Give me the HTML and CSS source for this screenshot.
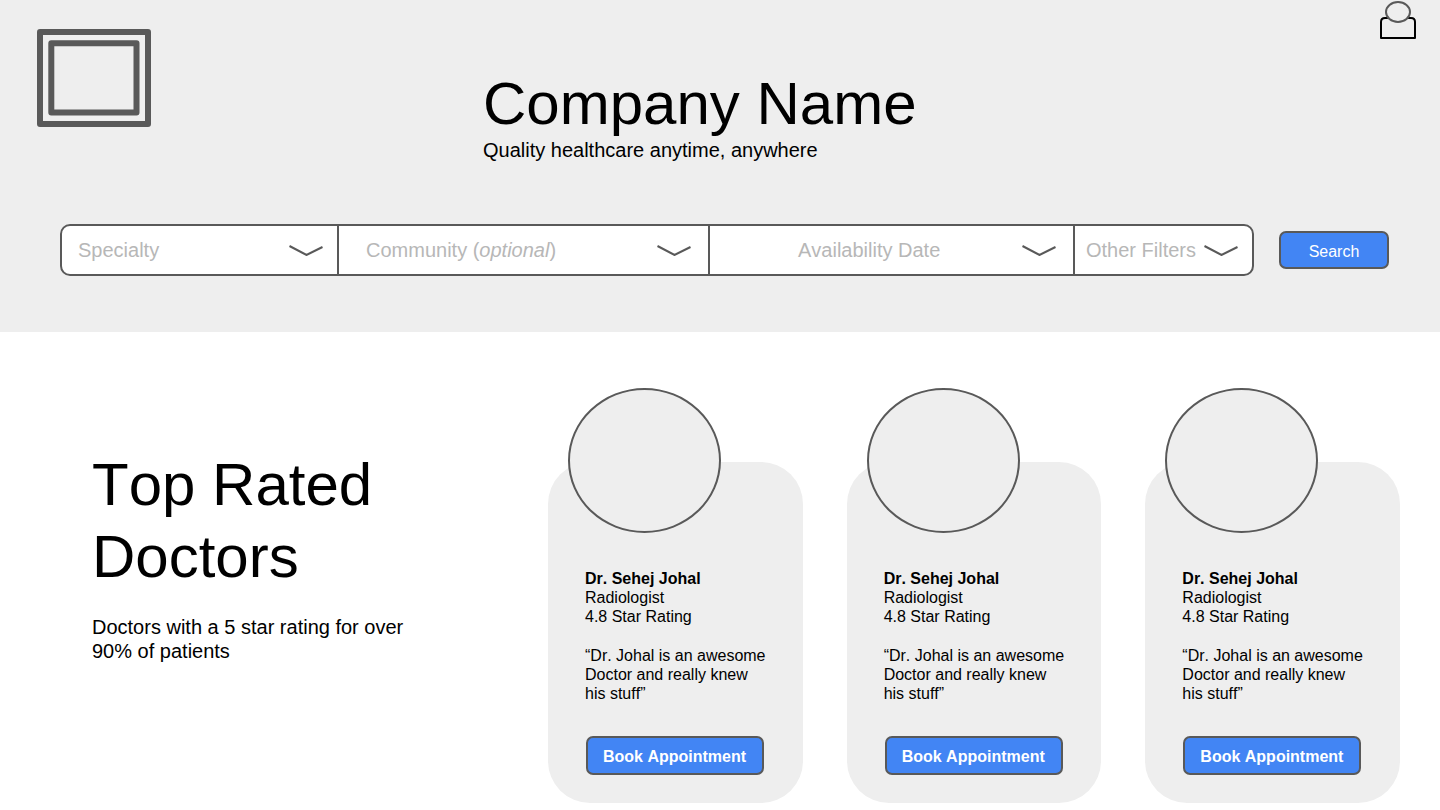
FILE: index.html
```html
<!DOCTYPE html>
<html lang="en">
<head>
<meta charset="utf-8">
<meta name="viewport" content="width=device-width, initial-scale=1">
<title>Company Name</title>
<link rel="stylesheet" href="styles.css">
</head>
<body>
<header class="hero">
  <div class="masthead">
    <svg class="logo" width="114" height="98" viewBox="0 0 114 98" fill="none" stroke="#595959" stroke-width="6" stroke-linejoin="round" aria-hidden="true">
      <rect x="3" y="3" width="108" height="92"/>
      <rect x="14.3" y="14.3" width="85.2" height="69.2"/>
    </svg>
    <div class="brand">
      <h1 class="title brand-name">Company Name</h1>
      <p class="lead">Quality healthcare anytime, anywhere</p>
    </div>
    <button class="account" type="button" aria-label="Account">
      <svg class="account-icon" width="36" height="39" viewBox="0 0 36 39" fill="#eeeeee" stroke-width="2" aria-hidden="true">
        <path d="M1 38V22Q1 18 5 18H31Q35 18 35 22V38Z" stroke="#000000" stroke-linejoin="round"/>
        <ellipse cx="18" cy="12" rx="12" ry="10" stroke="#595959"/>
      </svg>
    </button>
  </div>
  <form class="search">
    <div class="filters">
      <div class="field field-specialty">
        <select class="field-select" id="specialty"><option value=""></option></select>
        <label class="field-label" for="specialty">Specialty</label>
        <svg class="chevron" width="34" height="12" viewBox="0 0 34 12" aria-hidden="true"><path d="M0.5 2L17.5 11L33.5 3"/></svg>
      </div>
      <div class="field field-community">
        <select class="field-select" id="community"><option value=""></option></select>
        <label class="field-label" for="community">Community (<em>optional</em>)</label>
        <svg class="chevron" width="34" height="12" viewBox="0 0 34 12" aria-hidden="true"><path d="M0.5 2L17.5 11L33.5 3"/></svg>
      </div>
      <div class="field field-date">
        <select class="field-select" id="date"><option value=""></option></select>
        <label class="field-label" for="date">Availability Date</label>
        <svg class="chevron" width="34" height="12" viewBox="0 0 34 12" aria-hidden="true"><path d="M0.5 2L17.5 11L33.5 3"/></svg>
      </div>
      <div class="field field-other">
        <select class="field-select" id="other"><option value=""></option></select>
        <label class="field-label" for="other">Other Filters</label>
        <svg class="chevron" width="34" height="12" viewBox="0 0 34 12" aria-hidden="true"><path d="M0.5 2L17.5 11L33.5 3"/></svg>
      </div>
    </div>
    <button class="button button-search" type="submit">Search</button>
  </form>
</header>
<main class="top-rated">
  <section class="intro">
    <h2 class="title">Top Rated Doctors</h2>
    <p class="lead intro-text">Doctors with a 5 star rating for over 90% of patients</p>
  </section>
  <section class="cards" aria-label="Doctors">
    <article class="card">
      <div class="avatar"></div>
      <h3 class="name">Dr. Sehej Johal</h3>
      <p class="detail">Radiologist</p>
      <p class="detail">4.8 Star Rating</p>
      <p class="quote">“Dr. Johal is an awesome Doctor and really knew his stuff”</p>
      <button class="button button-book" type="button">Book Appointment</button>
    </article>
    <article class="card">
      <div class="avatar"></div>
      <h3 class="name">Dr. Sehej Johal</h3>
      <p class="detail">Radiologist</p>
      <p class="detail">4.8 Star Rating</p>
      <p class="quote">“Dr. Johal is an awesome Doctor and really knew his stuff”</p>
      <button class="button button-book" type="button">Book Appointment</button>
    </article>
    <article class="card">
      <div class="avatar"></div>
      <h3 class="name">Dr. Sehej Johal</h3>
      <p class="detail">Radiologist</p>
      <p class="detail">4.8 Star Rating</p>
      <p class="quote">“Dr. Johal is an awesome Doctor and really knew his stuff”</p>
      <button class="button button-book" type="button">Book Appointment</button>
    </article>
  </section>
</main>
</body>
</html>
```
FILE: styles.css
```css
* {
  box-sizing: border-box;
  margin: 0;
}

body {
  background: #ffffff;
  color: #000000;
  font-family: "Liberation Sans", Arial, sans-serif;
  font-size: 16px;
  line-height: 19px;
  font-kerning: none;
}

.title {
  font-size: 60px;
  font-weight: 400;
  line-height: 72px;
}

.lead {
  font-size: 20px;
  line-height: 24px;
}

.hero {
  background: #eeeeee;
  padding-bottom: 56px;
}

.masthead {
  display: grid;
  grid-template-columns: 446fr 897fr 36px;
  align-items: start;
  padding: 0 24px 0 37px;
}

.logo {
  margin-top: 29px;
}

.brand {
  padding: 70px 0 62px;
}

.brand-name {
  line-height: 68px;
}

.account {
  display: block;
  padding: 0;
  border: 0;
  background: none;
}

.account-icon {
  display: block;
}

.search {
  display: flex;
  align-items: center;
  gap: 25px;
  padding: 0 51px 0 60px;
}

.filters {
  flex: 1;
  display: grid;
  grid-template-columns: 277fr 371fr 365fr 177fr;
  background: #ffffff;
  border: 2px solid #595959;
  border-radius: 10px;
}

.field {
  display: grid;
  grid-template-columns: 1fr auto;
  align-items: center;
  min-height: 48px;
  border-right: 2px solid #595959;
}

.field-select {
  grid-area: 1 / 1 / 2 / 3;
  align-self: stretch;
  width: 100%;
  appearance: none;
  border: 0;
  background: transparent;
  font: inherit;
}

.field-label {
  grid-area: 1 / 1;
  color: #b7b7b7;
  font-size: 20px;
  line-height: 24px;
  white-space: nowrap;
  pointer-events: none;
}

.chevron {
  grid-area: 1 / 2;
  margin-right: 14px;
  fill: none;
  stroke: #595959;
  stroke-width: 2;
  pointer-events: none;
}

.field-specialty .field-label {
  padding-left: 16px;
}

.field-community .field-label {
  padding-left: 27px;
}

.field-date .field-label {
  padding-left: 88px;
}

.field-community .chevron,
.field-date .chevron {
  margin-right: 17px;
}

.field-other {
  border-right: 0;
}

.field-other .field-label {
  padding-left: 11px;
}

.button {
  border: 2px solid #595959;
  border-radius: 7px;
  background: #4285f4;
  color: #ffffff;
  font: inherit;
  font-kerning: none;
}

.button-search {
  min-width: 110px;
  padding: 9px 16px 6px;
}

.button-book {
  margin-left: 1px;
  padding: 9px 16px 7px 15px;
  font-weight: 700;
}

.top-rated {
  display: grid;
  grid-template-columns: 456fr 852fr;
  padding: 56px 40px 7px 92px;
}

.intro {
  max-width: 340px;
  padding-top: 61px;
}

.intro-text {
  margin-top: 22px;
}

.cards {
  display: grid;
  grid-template-columns: repeat(3, 1fr);
  gap: 44px;
  padding-top: 74px;
}

.card {
  padding: 0 36px 28px 37px;
  border-radius: 42px;
  background: #eeeeee;
}

.avatar {
  width: 153px;
  height: 145px;
  margin: -74px 0 36px -17px;
  border: 2px solid #595959;
  border-radius: 50%;
  background: #eeeeee;
}

.name {
  font-size: 16px;
  font-weight: 700;
}

.quote {
  margin: 20px 0 33px;
}
```
